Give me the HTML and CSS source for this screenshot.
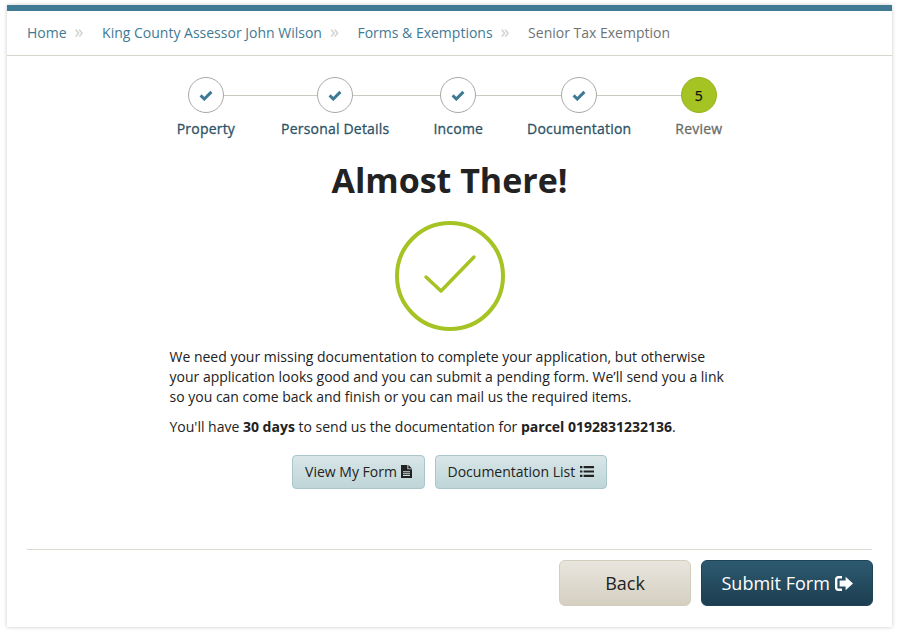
FILE: index.html
```html
<!DOCTYPE html>
<html lang="en">
<head>
<meta charset="utf-8">
<title>Senior Tax Exemption</title>
<link rel="stylesheet" href="styles.css">
</head>
<body>
<main class="card">
  <nav class="crumbs">
    <a class="crumb">Home</a><span class="sep">»</span>
    <a class="crumb">King County Assessor John Wilson</a><span class="sep">»</span>
    <a class="crumb">Forms &amp; Exemptions</a><span class="sep">»</span>
    <span class="crumb current">Senior Tax Exemption</span>
  </nav>
  <ol class="steps">
    <li class="step done"><span class="dot"><svg class="tick" viewBox="0 0 14 11"><path d="M1.6 5.4 5.3 9 12.4 1.9"/></svg></span><span class="label">Property</span></li>
    <li class="step done"><span class="dot"><svg class="tick" viewBox="0 0 14 11"><path d="M1.6 5.4 5.3 9 12.4 1.9"/></svg></span><span class="label">Personal Details</span></li>
    <li class="step done"><span class="dot"><svg class="tick" viewBox="0 0 14 11"><path d="M1.6 5.4 5.3 9 12.4 1.9"/></svg></span><span class="label">Income</span></li>
    <li class="step done"><span class="dot"><svg class="tick" viewBox="0 0 14 11"><path d="M1.6 5.4 5.3 9 12.4 1.9"/></svg></span><span class="label">Documentation</span></li>
    <li class="step active"><span class="dot">5</span><span class="label">Review</span></li>
  </ol>
  <h1 class="title">Almost There!</h1>
  <svg class="big-check" viewBox="0 0 110 110"><circle cx="55" cy="55" r="53"/><path d="M31 56 46 70 79 36"/></svg>
  <section class="copy">
    <p>We need your missing documentation to complete your application, but otherwise your application looks good and you can submit a pending form. We’ll send you a link so you can come back and finish or you can mail us the required items.</p>
    <p>You'll have <b>30 days</b> to send us the documentation for <b>parcel 0192831232136</b>.</p>
  </section>
  <div class="actions">
    <button class="btn-small">View My Form <svg class="ico-file" viewBox="0 0 11 13"><path fill-rule="evenodd" d="M0 0H6.4V4.2H11V13H0ZM7.3 0 11 3.4H7.3ZM2 6.3V7.3H9V6.3ZM2 8.2V9.2H9V8.2ZM2 10.1V11.1H9V10.1Z"/></svg></button>
    <button class="btn-small">Documentation List <svg class="ico-list" viewBox="0 0 14 11"><path d="M0 0H2.4V2.2H0ZM3.6 0H14V2.2H3.6ZM0 4.4H2.4V6.6H0ZM3.6 4.4H14V6.6H3.6ZM0 8.8H2.4V11H0ZM3.6 8.8H14V11H3.6Z"/></svg></button>
  </div>
  <footer class="footer">
    <button class="btn-large btn-back">Back</button>
    <button class="btn-large btn-submit">Submit Form <svg class="ico-exit" viewBox="0 0 18 15"><path d="M7 0H3.2C1.4 0 0 1.4 0 3.2V11.8C0 13.6 1.4 15 3.2 15H7V12.6H3.4C2.8 12.6 2.4 12.2 2.4 11.6V3.4C2.4 2.8 2.8 2.4 3.4 2.4H7ZM10.6 0.8V4.4H4.6V10.6H10.6V14.2L18 7.5Z"/></svg></button>
  </footer>
</main>
</body>
</html>
```
FILE: styles.css
```css
* { box-sizing: border-box; }
html, body { margin: 0; height: 100%; }
body {
  background: #fff;
  padding: 5px 5px 6px 7px;
  font-family: "Open Sans", "Liberation Sans", sans-serif;
  color: #222;
}
.card {
  height: 622px;
  background: #fff;
  border-top: 6px solid #3f7a94;
  box-shadow: 0 0 4px rgba(0, 0, 0, .22);
  display: flex;
  flex-direction: column;
  align-items: center;
}
.crumbs {
  align-self: stretch;
  height: 45px;
  border-bottom: 1px solid #d8d5cd;
  padding: 0 20px 1px;
  display: flex;
  align-items: center;
  font-size: 14px;
  color: #3f7a94;
}
.crumb { white-space: nowrap; }
.current { color: #6e7376; }
.sep {
  width: 35.5px;
  padding: 0 0 4px 8px;
  color: #cfcfcb;
  font-size: 18px;
  line-height: 18px;
}
.steps {
  list-style: none;
  margin: 21px 0 0;
  padding: 0;
  display: flex;
  gap: 45px;
}
.step {
  position: relative;
  display: flex;
  flex-direction: column;
  align-items: center;
  gap: 6px;
}
.step:nth-child(2) { margin-left: 1px; }
.step:nth-child(n+3) { margin-left: -1px; }
.step.done::after {
  content: "";
  position: absolute;
  top: 18px;
  left: calc(50% + 18px);
  height: 1px;
  background: #ccc9c2;
}
.step:nth-child(1)::after { width: 93px; }
.step:nth-child(2)::after { width: 87px; }
.step:nth-child(3)::after { width: 85px; }
.step:nth-child(4)::after { width: 84px; }
.dot {
  width: 36px;
  height: 36px;
  border-radius: 50%;
  border: 1px solid #a9a8a2;
  background: #fff;
  display: flex;
  align-items: center;
  justify-content: center;
  font-size: 14px;
  font-weight: 500;
  -webkit-text-stroke: .25px currentColor;
}
.tick { width: 14px; height: 11px; }
.tick path { fill: none; stroke: #3f7a94; stroke-width: 3; }
.active .dot { background: #a5c322; border-color: #97b21f; color: #111; }
.label {
  font-size: 14px;
  font-weight: 500;
  line-height: 19px;
  color: #2c5266;
  letter-spacing: .2px;
  white-space: nowrap;
  -webkit-text-stroke: .3px currentColor;
}
.active .label { color: #6b6b66; }
.title {
  margin: 19px 0 0;
  font-size: 34px;
  line-height: 46px;
  font-weight: 700;
  color: #222;
}
.big-check { width: 110px; height: 110px; margin-top: 18px; display: block; }
.big-check circle, .big-check path {
  fill: none;
  stroke: #a5c322;
  stroke-width: 4;
  stroke-linecap: round;
  stroke-linejoin: round;
}
.big-check path { stroke-width: 3.5; }
.copy {
  width: 560px;
  margin-top: 16px;
  font-size: 14px;
  line-height: 20px;
  color: #222;
}
.copy p { margin: 0 0 10px; }
.actions { display: flex; gap: 10px; margin-top: 8px; }
.btn-small {
  height: 34px;
  padding: 0 12px 1px;
  font: 400 14px "Open Sans", sans-serif;
  color: #222;
  border: 1px solid #a9c6cb;
  border-radius: 4px;
  background: linear-gradient(#d9e6e8, #bed5d8);
  display: flex;
  align-items: center;
  white-space: pre;
}
.ico-file { width: 11px; height: 13px; fill: #222; }
.ico-list { width: 14px; height: 11px; fill: #222; margin-left: 1px; }
.footer {
  align-self: stretch;
  margin: 60px 20px 0;
  padding-top: 10px;
  border-top: 1px solid #dcd9d1;
  display: flex;
  justify-content: flex-end;
  gap: 10px;
}
.btn-large {
  height: 46px;
  border-radius: 6px;
  font: 400 18px "Open Sans", sans-serif;
  display: flex;
  align-items: center;
  justify-content: center;
  white-space: pre;
}
.btn-back {
  width: 132px;
  color: #222;
  border: 1px solid #d2cdbd;
  background: linear-gradient(#e8e5dd, #d4cfc1);
}
.btn-submit {
  width: 172px;
  margin-right: -1px;
  color: #fff;
  border: 1px solid #1f4456;
  background: linear-gradient(#2d5a70, #1d3e50);
}
.ico-exit { width: 18px; height: 15px; fill: #fff; }
```
